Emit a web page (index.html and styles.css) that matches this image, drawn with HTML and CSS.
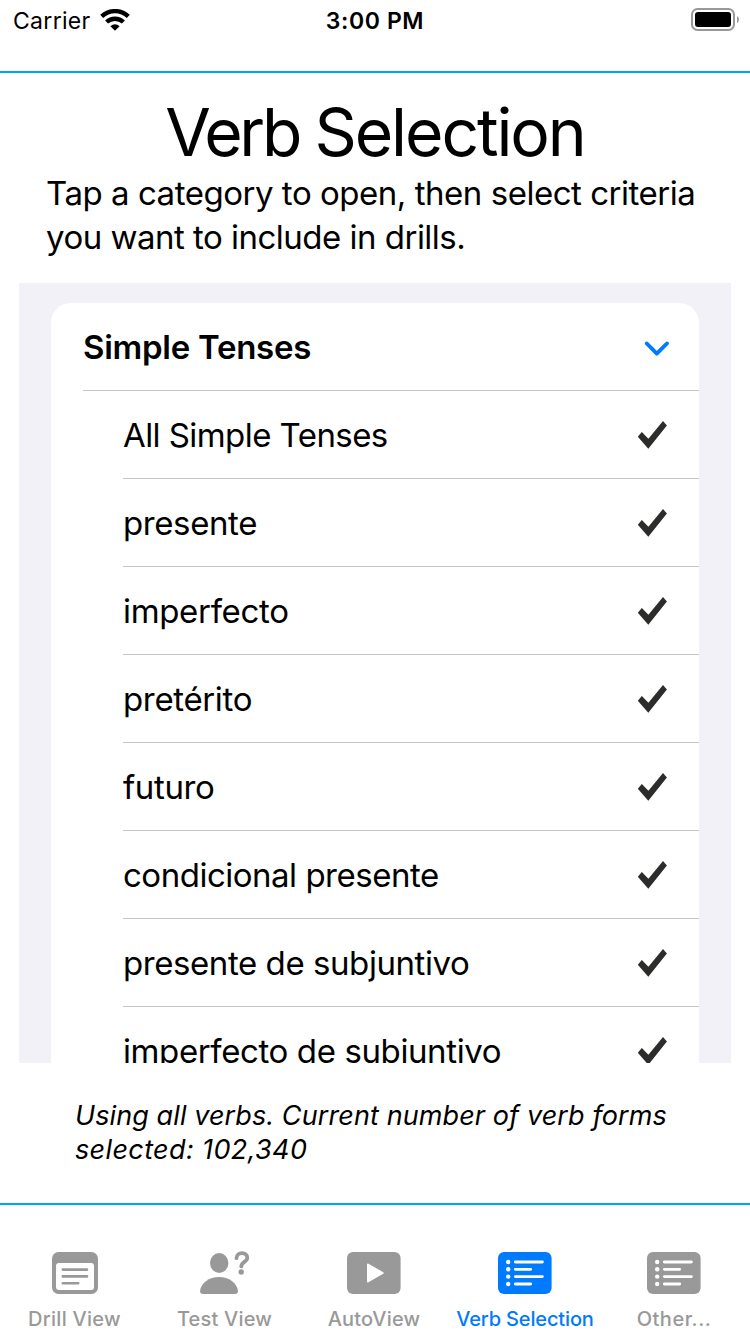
FILE: index.html
```html
<!DOCTYPE html>
<html lang="en">
<head>
<meta charset="utf-8">
<title>Verb Selection</title>
<link rel="stylesheet" href="styles.css">
</head>
<body>
<svg class="defs" width="0" height="0">
  <symbol id="check" viewBox="0 0 30 28"><path d="M-.2 15.7 3.8 11.1 10.4 17.8 25 0 28.9 4.6 10.3 27.8Z"/></symbol>
  <symbol id="list" viewBox="0 0 54 42">
    <rect width="53.6" height="42" rx="6" fill="currentColor"/>
    <g fill="#fff"><circle cx="10.2" cy="10" r="2.2"/><circle cx="10.2" cy="17.3" r="2.2"/><circle cx="10.2" cy="24.6" r="2.2"/><circle cx="10.2" cy="32" r="2.2"/></g>
    <path d="M17.3 10H44.4M17.3 17.3H32.7M17.3 24.6H44.4M17.3 32H32.7" stroke="#fff" stroke-width="2.8" stroke-linecap="round"/>
  </symbol>
</svg>
<div class="screen">
  <header class="status">
    <div class="network">
      <span class="carrier">Carrier</span>
      <svg class="wifi" width="30" height="22" viewBox="0 0 30 22">
        <g fill="none" stroke="#000" stroke-width="4.4"><path d="M1.7 7.4A19.4 19.4 0 0 1 28.3 7.4"/><path d="M6.6 13A12.4 12.4 0 0 1 23.4 13"/></g>
        <path d="M10.4 17.3Q15 13.4 19.6 17.3L15 21.8Z"/>
      </svg>
    </div>
    <span class="clock">3:00 PM</span>
    <svg class="battery" width="48" height="24" viewBox="0 0 48 24">
      <rect x="1" y="1" width="42" height="21" rx="5.5" fill="none" stroke="#999" stroke-width="2"/>
      <rect x="4" y="4" width="36" height="15" rx="3"/>
      <path d="M46 8Q48 9 48 11.5T46 15Z" fill="#999"/>
    </svg>
  </header>
  <main class="content">
    <h1 class="title"><span class="title-verb">Verb</span> Selection</h1>
    <p class="intro"><span class="intro-first">Tap a category to open, then select criteria</span><br><span class="intro-second">you want to include in drills.</span></p>
    <section class="panel">
      <div class="card">
        <div class="row group"><span class="label l0">Simple Tenses</span>
          <svg class="chevron" width="26" height="16" viewBox="0 0 26 16"><path d="M2.8 2.5 12.8 12.7 22.9 2.5" fill="none" stroke="#007aff" stroke-width="3.9" stroke-linecap="round" stroke-linejoin="round"/></svg>
        </div>
        <div class="row"><span class="label l1">All Simple Tenses</span><svg class="check"><use href="#check"/></svg></div>
        <div class="row"><span class="label l2">presente</span><svg class="check"><use href="#check"/></svg></div>
        <div class="row"><span class="label l3">imperfecto</span><svg class="check"><use href="#check"/></svg></div>
        <div class="row"><span class="label l4">pretérito</span><svg class="check"><use href="#check"/></svg></div>
        <div class="row"><span class="label l5">futuro</span><svg class="check"><use href="#check"/></svg></div>
        <div class="row"><span class="label l6">condicional presente</span><svg class="check"><use href="#check"/></svg></div>
        <div class="row"><span class="label l7">presente de subjuntivo</span><svg class="check"><use href="#check"/></svg></div>
        <div class="row"><span class="label l8">imperfecto de subjuntivo</span><svg class="check"><use href="#check"/></svg></div>
      </div>
    </section>
    <p class="summary"><span class="summary-first">Using all verbs. Current number of verb forms</span><br><span class="summary-second">selected: 102,340</span></p>
  </main>
  <nav class="tabs">
    <a class="tab">
      <svg class="icon" width="46" height="42" viewBox="0 0 46 42"><rect width="46" height="42" rx="6.5" fill="currentColor"/><rect x="4" y="11" width="38" height="27" rx="3" fill="#fff"/><path d="M10.8 17.6H35M10.8 24.4H35M10.8 31.2H26.2" stroke="currentColor" stroke-width="2.6" stroke-linecap="round"/></svg>
      <span class="name drill">Drill View</span>
    </a>
    <a class="tab">
      <svg class="icon" width="50" height="44" viewBox="0 0 50 44"><g fill="currentColor"><ellipse cx="19.2" cy="13" rx="9.2" ry="10"/><path d="M3 44Q0 44 0 41C1 33 9 27 19 27S37 33 38 41Q38 44 35 44Z"/><circle cx="41.2" cy="22" r="2.7"/></g><path d="M36.5 8.2C36.5 1.4 47.3 1.4 47.3 7.8C47.3 12 41.3 11.8 41.3 16.4" fill="none" stroke="currentColor" stroke-width="3.8" stroke-linecap="round"/></svg>
      <span class="name test">Test View</span>
    </a>
    <a class="tab shifted">
      <svg class="icon" width="54" height="42" viewBox="0 0 54 42"><rect width="53.6" height="42" rx="6" fill="currentColor"/><path d="M21 12.5 35.7 21 21 29.5Z" fill="#fff" stroke="#fff" stroke-width="2" stroke-linejoin="round"/></svg>
      <span class="name auto">AutoView</span>
    </a>
    <a class="tab active"><svg class="icon" width="54" height="42"><use href="#list"/></svg><span class="name verb">Verb Selection</span></a>
    <a class="tab shifted"><svg class="icon" width="54" height="42"><use href="#list"/></svg><span class="name other">Other...</span></a>
  </nav>
</div>
</body>
</html>
```
FILE: styles.css
```css
* { box-sizing: border-box; }
body { margin: 0; background: #fff; color: #000; font-family: Inter, "Liberation Sans", sans-serif; }
.defs { display: block; height: 0; }
.screen { width: 750px; height: 1334px; display: flex; flex-direction: column; overflow: hidden; }
.status { height: 73px; border-bottom: 2px solid #00a2ff; display: grid; grid-template-columns: 1fr auto 1fr; align-items: start; padding: 8px 11px 0 13px; font-size: 23px; line-height: 26px; }
.network { display: flex; gap: 9px; }
.wifi { margin-top: 1px; }
.carrier { letter-spacing: .3px; }
.clock { font-weight: 600; letter-spacing: .6px; padding-right: 2px; }
.battery { justify-self: end; }
.content { height: 1130px; padding: 0 19px; }
.title { margin: 0; padding-top: 19px; text-align: center; font-weight: 400; font-size: 66px; line-height: 80px; letter-spacing: -2.1px; word-spacing: -1px; white-space: nowrap; }
.title-verb { letter-spacing: -3.3px; }
.intro { margin: -1px 0 0 27px; font-size: 33px; line-height: 44px; white-space: nowrap; padding-bottom: 24px; }
.intro-first { letter-spacing: -.47px; }
.intro-second { letter-spacing: -.51px; }
.panel { height: 780px; background: #f2f1f7; padding: 20px 32px 0; overflow: hidden; }
.card { background: #fff; border-radius: 20px 20px 0 0; overflow: hidden; }
.row { height: 88px; margin-left: 72px; padding-right: 31px; border-bottom: 1px solid #c6c6c8; display: flex; justify-content: space-between; align-items: center; font-size: 33px; white-space: nowrap; }
.group { margin-left: 32px; padding-right: 29px; font-weight: 600; }
.l0 { letter-spacing: -.27px; }
.l1 { letter-spacing: -.57px; }
.l2 { letter-spacing: -.4px; }
.l3 { letter-spacing: -.33px; }
.l4 { letter-spacing: -.35px; }
.l5 { letter-spacing: -.38px; }
.l6 { letter-spacing: -.49px; }
.l7 { letter-spacing: -.43px; }
.l8 { letter-spacing: -.39px; }
.check { width: 30px; height: 28px; fill: #2c2c2a; overflow: visible; }
.chevron { margin-top: 4px; }
.summary { margin: 0; padding: 36px 0 0 56px; font-size: 27px; line-height: 34px; font-style: italic; white-space: nowrap; }
.summary-first { letter-spacing: .1px; }
.summary-second { letter-spacing: .37px; }
.tabs { height: 131px; border-top: 2px solid #00a2ff; display: grid; grid-template-columns: repeat(5, 1fr); }
.tab { display: flex; flex-direction: column; align-items: center; justify-content: flex-end; color: #999; padding-bottom: 2px; font-size: 20px; font-weight: 500; line-height: 26px; gap: 12px; white-space: nowrap; }
.shifted { padding-right: 2px; }
.active { color: #007aff; }
.drill { letter-spacing: .27px; margin-right: 1px; }
.test { letter-spacing: .2px; margin-right: 1px; }
.auto { letter-spacing: .2px; }
.verb { letter-spacing: -.15px; }
.other { letter-spacing: .5px; }
```
